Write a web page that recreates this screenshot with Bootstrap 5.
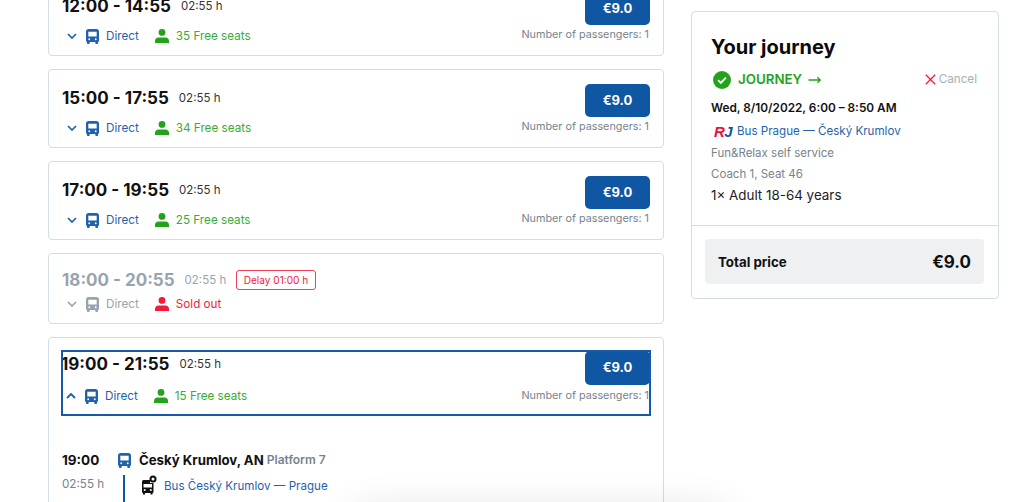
<!DOCTYPE html>
<html lang="en">
<head>
  <meta charset="UTF-8" />
  <meta name="viewport" content="width=device-width, initial-scale=1.0"/>
  <title>Your journey</title>
  <link href="https://cdn.jsdelivr.net/npm/bootstrap@5.3.0/dist/css/bootstrap.min.css" rel="stylesheet"/>
  <style>
    html, body { height: 502px; overflow: hidden; }
    body { font-family: Inter, "Liberation Sans", sans-serif; color: #111; background: #fff; font-size: 11.7px; }
    .page-wrap { margin-top: -23px; padding-left: 48px; width: 999px; gap: 27px; }
    .conn-col { width: 616px; gap: 13px; }
    .conn-item { border: 1px solid #d3dde4; border-radius: 4px; background: #fff; }
    .conn-row { height: 79px; padding: 0 13px; }
    .conn-row.sold { height: 71px; }
    .conn-main { padding-top: 17px; }
    .conn-side { padding-top: 14px; }
    .conn-open { height: 66px; margin: 12px 12px 0; width: 590px; outline: 2px solid #1559a8; outline-offset: -2px; }
    .open-main { padding-top: 3px; }
    .open-main .info-line { margin-top: 13px; }
    .open-side { padding: 1px 1px 0 0; }
    .open-side .price-btn { height: 34px; }
    .open-side .pax-txt { margin-top: 4px; margin-right: 1px; }
    .time-txt { font-size: 17px; font-weight: 700; line-height: 22px; }
    .dur-txt { font-size: 11.5px; line-height: 22px; color: #333; margin-left: 10px; }
    .info-line { color: #1f62ad; line-height: 16px; margin-top: 11px; padding-left: 5px; }
    .seat-txt { color: #3bab3b; }
    .seat-svg { color: #22a31a; margin-left: 16px; margin-right: 7px; }
    .bus-ico { margin-left: 9px; margin-right: 7px; }
    .price-btn { width: 65px; height: 33px; background: #0f56a3; color: #fff; font-size: 13px; font-weight: 700; border: 0; border-radius: 5px; padding: 0; }
    .pax-txt { font-size: 10.8px; color: #76838d; line-height: 14px; margin-top: 3px; margin-right: 1px; white-space: nowrap; }
    .sold .conn-main { padding-top: 15px; }
    .sold .time-txt, .sold .dur-txt, .sold .info-line { color: #98a4ad; }
    .sold .info-line { margin-top: 5px; }
    .sold-txt { color: #f5193c; }
    .sold-svg { color: #f5193c; margin-left: 16px; margin-right: 7px; }
    .delay-tag { border: 1px solid #f2405a; border-radius: 3px; color: #f5193c; font-size: 10.1px; line-height: 18px; padding: 0 6.500px; margin-left: 10px; }
    .stop-row { padding: 0 13px; margin-top: 35px; }
    .stop-time { width: 56px; font-size: 13.5px; font-weight: 700; line-height: 18px; }
    .stop-bus { color: #1f62ad; }
    .stop-name { font-size: 13.2px; font-weight: 700; margin-left: 8px; line-height: 18px; }
    .plat-txt { font-size: 12px; font-weight: 600; color: #76838d; margin-left: 3px; }
    .leg-row { padding: 0 13px; margin-top: 6px; }
    .leg-dur { width: 61px; color: #76838d; line-height: 15px; margin-top: 2px; }
    .leg-line { border-left: 2px solid #0f56a3; height: 40px; padding-left: 16px; }
    .leg-link { color: #1f62ad; margin-left: 7px; line-height: 18px; font-size: 11.6px; margin-top: 2px; }
    .side-box { width: 308px; margin-top: 34px; height: 288px; border: 1px solid #d3dde4; border-radius: 4px; }
    .side-top { height: 214px; padding: 22px 19px 0; border-bottom: 1px solid #d3dde4; }
    .side-title { font-size: 20px; font-weight: 700; line-height: 26px; margin: 0; color: #0b0b0b; }
    .j-row { margin-top: 10px; padding-left: 2px; padding-right: 2px; }
    .j-label { color: #22a31a; font-size: 13.300px; font-weight: 600; margin-left: 7px; }
    .j-arrow { margin-left: 6px; }
    .cancel-txt { color: #a5afb6; font-size: 11.7px; margin-left: 3px; }
    .j-date { font-size: 11.800px; font-weight: 600; line-height: 16px; margin-top: 10px; }
    .j-trip { margin-top: 7px; }
    .j-link { color: #1f62ad; font-size: 11.6px; margin-left: 6px; }
    .rj-mark { font-family: "Liberation Sans", sans-serif; font-size: 15px; font-weight: 700; font-style: italic; line-height: 16px; padding-left: 3px; width: 20px; letter-spacing: -.5px; }
    .rj-r { color: #e8133c; }
    .rj-j { color: #0f56a3; }
    .grey-line { color: #76838d; font-size: 11.5px; line-height: 16px; margin-top: 5px; }
    .adult-line { font-size: 13.400px; line-height: 18px; margin-top: 4px; color: #222; }
    .total-box { background: #eef0f1; border-radius: 4px; margin: 13px 14px 0 13px; height: 45px; padding: 2px 13px 0; }
    .total-lbl { font-size: 13.300px; font-weight: 700; }
    .total-val { font-size: 17px; font-weight: 700; }
    /* shadow of the sheet that sits just below the fold */
    .fold-glow { position: fixed; left: 360px; top: 516px; width: 360px; height: 40px; box-shadow: 0 0 40px 4px rgba(0, 0, 0, .14); pointer-events: none; }
  </style>
</head>
<body>
  <svg width="0" height="0" class="d-block">
    <defs>
      <symbol id="busIco" viewBox="0 0 14 16">
        <path fill="currentColor" fill-rule="evenodd" d="M3 0h8a3 3 0 0 1 3 3v9.500a1.500 1.500 0 0 1-1 1.400V15a1 1 0 0 1-1 1h-1a1 1 0 0 1-1-1v-1H4v1a1 1 0 0 1-1 1H2a1 1 0 0 1-1-1v-1.100a1.500 1.500 0 0 1-1-1.400V3a3 3 0 0 1 3-3zM2.500 3v5h9V3zM3.500 10a1 1 0 1 0 0 2 1 1 0 0 0 0-2zm7 0a1 1 0 1 0 0 2 1 1 0 0 0 0-2z"/>
      </symbol>
      <symbol id="seatIco" viewBox="0 0 14 14">
        <circle fill="currentColor" cx="7" cy="3.400" r="3.400"/>
        <path fill="currentColor" d="M3.500 8.500h7c2 0 3.500 1.500 3.500 3.500v2H0v-2c0-2 1.500-3.500 3.500-3.500z"/>
      </symbol>
      <symbol id="chevDown" viewBox="0 0 10 6">
        <path fill="none" stroke="currentColor" stroke-width="1.700" d="M1 1l4 4 4-4"/>
      </symbol>
      <symbol id="chevUp" viewBox="0 0 10 6">
        <path fill="none" stroke="currentColor" stroke-width="1.900" d="M1 5l4-4 4 4"/>
      </symbol>
    </defs>
  </svg>

  <div class="page-wrap d-flex align-items-start">
    <div class="conn-col d-flex flex-column">

      <div class="conn-item conn-row d-flex justify-content-between">
        <div class="conn-main">
          <div class="d-flex"><span class="time-txt">12:00 - 14:55</span><span class="dur-txt">02:55 h</span></div>
          <div class="info-line d-flex align-items-center">
            <svg width="10" height="6"><use href="#chevDown"/></svg>
            <svg class="bus-ico" width="13" height="15"><use href="#busIco"/></svg>Direct
            <svg class="seat-svg" width="14" height="14"><use href="#seatIco"/></svg><span class="seat-txt">35 Free seats</span>
          </div>
        </div>
        <div class="conn-side d-flex flex-column align-items-end">
          <button class="price-btn">€9.0</button>
          <div class="pax-txt">Number of passengers: 1</div>
        </div>
      </div>

      <div class="conn-item conn-row d-flex justify-content-between">
        <div class="conn-main">
          <div class="d-flex"><span class="time-txt">15:00 - 17:55</span><span class="dur-txt">02:55 h</span></div>
          <div class="info-line d-flex align-items-center">
            <svg width="10" height="6"><use href="#chevDown"/></svg>
            <svg class="bus-ico" width="13" height="15"><use href="#busIco"/></svg>Direct
            <svg class="seat-svg" width="14" height="14"><use href="#seatIco"/></svg><span class="seat-txt">34 Free seats</span>
          </div>
        </div>
        <div class="conn-side d-flex flex-column align-items-end">
          <button class="price-btn">€9.0</button>
          <div class="pax-txt">Number of passengers: 1</div>
        </div>
      </div>

      <div class="conn-item conn-row d-flex justify-content-between">
        <div class="conn-main">
          <div class="d-flex"><span class="time-txt">17:00 - 19:55</span><span class="dur-txt">02:55 h</span></div>
          <div class="info-line d-flex align-items-center">
            <svg width="10" height="6"><use href="#chevDown"/></svg>
            <svg class="bus-ico" width="13" height="15"><use href="#busIco"/></svg>Direct
            <svg class="seat-svg" width="14" height="14"><use href="#seatIco"/></svg><span class="seat-txt">25 Free seats</span>
          </div>
        </div>
        <div class="conn-side d-flex flex-column align-items-end">
          <button class="price-btn">€9.0</button>
          <div class="pax-txt">Number of passengers: 1</div>
        </div>
      </div>

      <div class="conn-item conn-row sold">
        <div class="conn-main">
          <div class="d-flex align-items-center"><span class="time-txt">18:00 - 20:55</span><span class="dur-txt">02:55 h</span><span class="delay-tag">Delay 01:00 h</span></div>
          <div class="info-line d-flex align-items-center">
            <svg width="10" height="6"><use href="#chevDown"/></svg>
            <svg class="bus-ico" width="13" height="15"><use href="#busIco"/></svg>Direct
            <svg class="sold-svg" width="14" height="14"><use href="#seatIco"/></svg><span class="sold-txt">Sold out</span>
          </div>
        </div>
      </div>

      <div class="conn-item">
        <div class="conn-open d-flex justify-content-between">
          <div class="open-main">
            <div class="d-flex"><span class="time-txt">19:00 - 21:55</span><span class="dur-txt">02:55 h</span></div>
            <div class="info-line d-flex align-items-center">
              <svg width="10" height="6"><use href="#chevUp"/></svg>
              <svg class="bus-ico" width="13" height="15"><use href="#busIco"/></svg>Direct
              <svg class="seat-svg" width="14" height="14"><use href="#seatIco"/></svg><span class="seat-txt">15 Free seats</span>
            </div>
          </div>
          <div class="open-side d-flex flex-column align-items-end">
            <button class="price-btn">€9.0</button>
            <div class="pax-txt">Number of passengers: 1</div>
          </div>
        </div>
        <div class="stop-row d-flex align-items-center">
          <span class="stop-time">19:00</span>
          <svg width="13" height="15" class="stop-bus"><use href="#busIco"/></svg>
          <span class="stop-name">Český Krumlov, AN</span><span class="plat-txt">Platform 7</span>
        </div>
        <div class="leg-row d-flex">
          <span class="leg-dur">02:55 h</span>
          <div class="leg-line d-flex align-items-start">
            <svg width="16" height="20" viewBox="0 0 16 20">
              <path d="M2.500 5H9v3h3.500v9a1 1 0 0 1-1 1v1.500H9.500V18H4v1.500H2V18a1 1 0 0 1-1-1V6.500A1.500 1.500 0 0 1 2.500 5z" fill="#111"/>
              <rect x="2.500" y="9" width="8.500" height="3.500" fill="#fff"/>
              <circle cx="3.700" cy="15" r="1" fill="#fff"/>
              <circle cx="9.800" cy="15" r="1" fill="#fff"/>
              <circle cx="12" cy="4" r="3.500" fill="#111"/>
              <circle cx="12" cy="4" r="1.500" fill="#fff"/>
            </svg>
            <span class="leg-link">Bus Český Krumlov — Prague</span>
          </div>
        </div>
      </div>

    </div>

    <aside class="side-box">
      <div class="side-top">
        <h2 class="side-title">Your journey</h2>
        <div class="j-row d-flex align-items-center justify-content-between">
          <div class="d-flex align-items-center">
            <svg width="18" height="18" viewBox="0 0 17 17">
              <circle cx="8.500" cy="8.500" r="8.500" fill="#22a31a"/>
              <path d="M4.800 8.700l2.600 2.500 4.800-5" fill="none" stroke="#fff" stroke-width="1.700"/>
            </svg>
            <span class="j-label">JOURNEY</span>
            <svg class="j-arrow" width="14" height="8" viewBox="0 0 13 8">
              <path d="M0 4h11.500M8.800 1.200L11.800 4 8.800 6.800" fill="none" stroke="#22a31a" stroke-width="1.300"/>
            </svg>
          </div>
          <div class="d-flex align-items-center">
            <svg width="11" height="11" viewBox="0 0 10 10">
              <path d="M.7.7l8.600 8.600M9.300.7L.7 9.300" stroke="#f5193c" stroke-width="1.200"/>
            </svg>
            <span class="cancel-txt">Cancel</span>
          </div>
        </div>
        <div class="j-date">Wed, 8/10/2022, 6:00 – 8:50 AM</div>
        <div class="j-trip d-flex align-items-center">
          <span class="rj-mark"><span class="rj-r">R</span><span class="rj-j">J</span></span>
          <span class="j-link">Bus Prague — Český Krumlov</span>
        </div>
        <div class="grey-line">Fun&amp;Relax self service</div>
        <div class="grey-line">Coach 1, Seat 46</div>
        <div class="adult-line">1× Adult 18-64 years</div>
      </div>
      <div class="total-box d-flex align-items-center justify-content-between">
        <span class="total-lbl">Total price</span>
        <span class="total-val">€9.0</span>
      </div>
    </aside>
  </div>
  <div class="fold-glow"></div>
</body>
</html>
